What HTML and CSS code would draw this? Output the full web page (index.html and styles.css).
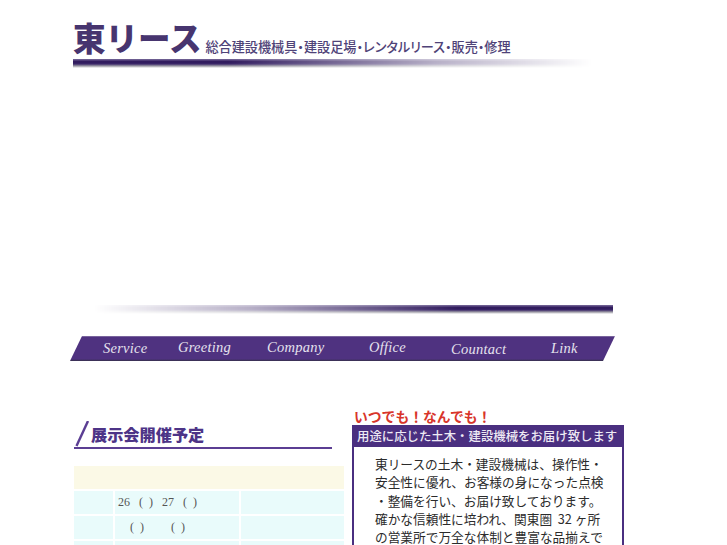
FILE: index.html
```html
<!DOCTYPE html>
<html lang="ja">
<head>
    <meta charset="UTF-8">
    <meta name="viewport" content="width=device-width, initial-scale=1.0">
    <title>東リース</title>
    <link rel="stylesheet" href="styles.css">
</head>
<body>
    <div class="page">
        <header class="site-head">
            <div class="logo-row">
                <span class="logo">東リース</span>
                <span class="tagline">総合建設機械具・建設足場・レンタルリース・販売・修理</span>
            </div>
            <div class="rule rule-top"></div>
        </header>

        <div class="hero"></div>
        <div class="rule rule-bottom"></div>

        <nav class="main-nav">
            <a href="#">Service</a>
            <a href="#" class="up">Greeting</a>
            <a href="#" class="up">Company</a>
            <a href="#" class="up">Office</a>
            <a href="#" class="down">Countact</a>
            <a href="#">Link</a>
        </nav>

        <main class="columns">
            <section class="col-left">
                <h2 class="section-title">
                    <svg class="title-slash" width="14" height="26" viewBox="0 0 14 26"><path d="M13 0 L1.5 25" stroke="#5b3e93" stroke-width="2.4" fill="none"/></svg>
                    <span>展示会開催予定</span>
                </h2>
                <table class="show-table">
                    <colgroup><col class="c1"><col class="c2"><col class="c3"></colgroup>
                    <tr><td colspan="3" class="cell-head"></td></tr>
                    <tr><td></td><td class="cell-date">26   (  )   27   (  )</td><td></td></tr>
                    <tr><td></td><td class="cell-date">    (  )         (  )</td><td></td></tr>
                    <tr><td></td><td class="cell-date"></td><td></td></tr>
                </table>
            </section>

            <section class="col-right">
                <p class="catch">いつでも！なんでも！</p>
                <div class="info-box">
                    <h3 class="info-title">用途に応じた土木・建設機械をお届け致します</h3>
                    <p class="info-text">東リースの土木・建設機械は、操作性・<br>安全性に優れ、お客様の身になった点検<br>・整備を行い、お届け致しております。<br>確かな信頼性に培われ、関東圏&nbsp;&nbsp;32&nbsp;ヶ所<br>の営業所で万全な体制と豊富な品揃えで</p>
                </div>
            </section>
        </main>
    </div>
</body>
</html>
```

FILE: styles.css
```css
* {
    margin: 0;
    padding: 0;
    box-sizing: border-box;
}

body {
    background: #ffffff;
    font-family: "Noto Sans CJK JP", "Noto Sans", sans-serif;
}

.page {
    height: 100vh;
    overflow: hidden;
}

.site-head {
    padding: 15px 0 0 73px;
}

.logo-row {
    display: flex;
    align-items: flex-end;
    height: 44px;
}

.logo {
    font-size: 32.5px;
    line-height: 44px;
    font-weight: 900;
    color: #47356f;
}

.tagline {
    margin-left: 4px;
    margin-bottom: 4px;
    font-size: 13.15px;
    line-height: 16px;
    font-weight: 500;
    color: #4f4378;
    white-space: nowrap;
    font-feature-settings: "palt";
}

.rule {
    height: 9px;
    background: linear-gradient(to bottom, #7a6c9c 0, #2c1659 30%, #3b2769 55%, #9c9aa4 78%, #ffffff 100%);
}

.rule-top {
    width: 519px;
    -webkit-mask-image: linear-gradient(to right, #000 30%, rgba(0, 0, 0, 0.35) 70%, transparent 100%);
    mask-image: linear-gradient(to right, #000 30%, rgba(0, 0, 0, 0.35) 70%, transparent 100%);
}

.hero {
    height: 237px;
}

.rule-bottom {
    width: 519px;
    margin-left: 94px;
    -webkit-mask-image: linear-gradient(to left, #000 30%, rgba(0, 0, 0, 0.35) 70%, transparent 100%);
    mask-image: linear-gradient(to left, #000 30%, rgba(0, 0, 0, 0.35) 70%, transparent 100%);
}

.main-nav {
    display: grid;
    grid-template-columns: 75px 89px 102px 82px 100px 64px;
    align-items: center;
    width: 545px;
    height: 25px;
    margin: 22px 0 0 70px;
    padding-left: 33px;
    background: linear-gradient(to bottom, #8d7cab 0, #4f3280 6%, #4f3280 92%, #35304a 100%);
    clip-path: polygon(12px 0, 100% 0, 533px 100%, 0 100%);
}

.main-nav a {
    font-family: "Liberation Serif", serif;
    font-style: italic;
    font-size: 14.5px;
    letter-spacing: 0.25px;
    color: #e6e2ee;
    text-decoration: none;
}

.main-nav a.up {
    margin-top: -3px;
}

.main-nav a.down {
    margin-top: 2px;
}

.columns {
    display: flex;
    gap: 8px;
    margin: 49px 0 0 74px;
}

.col-left {
    width: 270px;
}

.section-title {
    display: flex;
    align-items: flex-end;
    width: 258px;
    height: 26px;
    margin-top: 13px;
    border-bottom: 2px solid #5b3e93;
    font-size: 16.2px;
    line-height: 26px;
    font-weight: 900;
    color: #4d3487;
}

.title-slash {
    flex: none;
    margin-left: 1px;
}

.section-title span {
    margin-left: 2px;
}

.show-table {
    margin: 15px 0 0 -2px;
    border-spacing: 2px;
    width: 274px;
    table-layout: fixed;
}

.show-table .c1 {
    width: 39px;
}

.show-table .c2 {
    width: 124px;
}

.show-table td {
    height: 23px;
    background: #e9fbfb;
    font-family: "Liberation Serif", serif;
    font-size: 12px;
    color: #555555;
    white-space: pre;
}

.show-table td.cell-head {
    background: #fbf9e6;
}

.show-table td.cell-date {
    padding-left: 3px;
}

.col-right {
    width: 272px;
}

.catch {
    margin-top: -1px;
    margin-bottom: 1px;
    margin-left: 2px;
    font-size: 13.8px;
    line-height: 15px;
    font-weight: 700;
    color: #d8352a;
}

.info-box {
    border: 2px solid #4a2f80;
    border-top: 0;
}

.info-title {
    background: #4a2f80;
    height: 22px;
    padding-left: 3px;
    font-size: 12.4px;
    line-height: 22px;
    font-weight: 500;
    color: #eeeaf4;
    white-space: nowrap;
}

.info-text {
    padding: 8px 0 0 21px;
    font-size: 12.7px;
    line-height: 18.3px;
    color: #2b2b2b;
    white-space: nowrap;
}
```
